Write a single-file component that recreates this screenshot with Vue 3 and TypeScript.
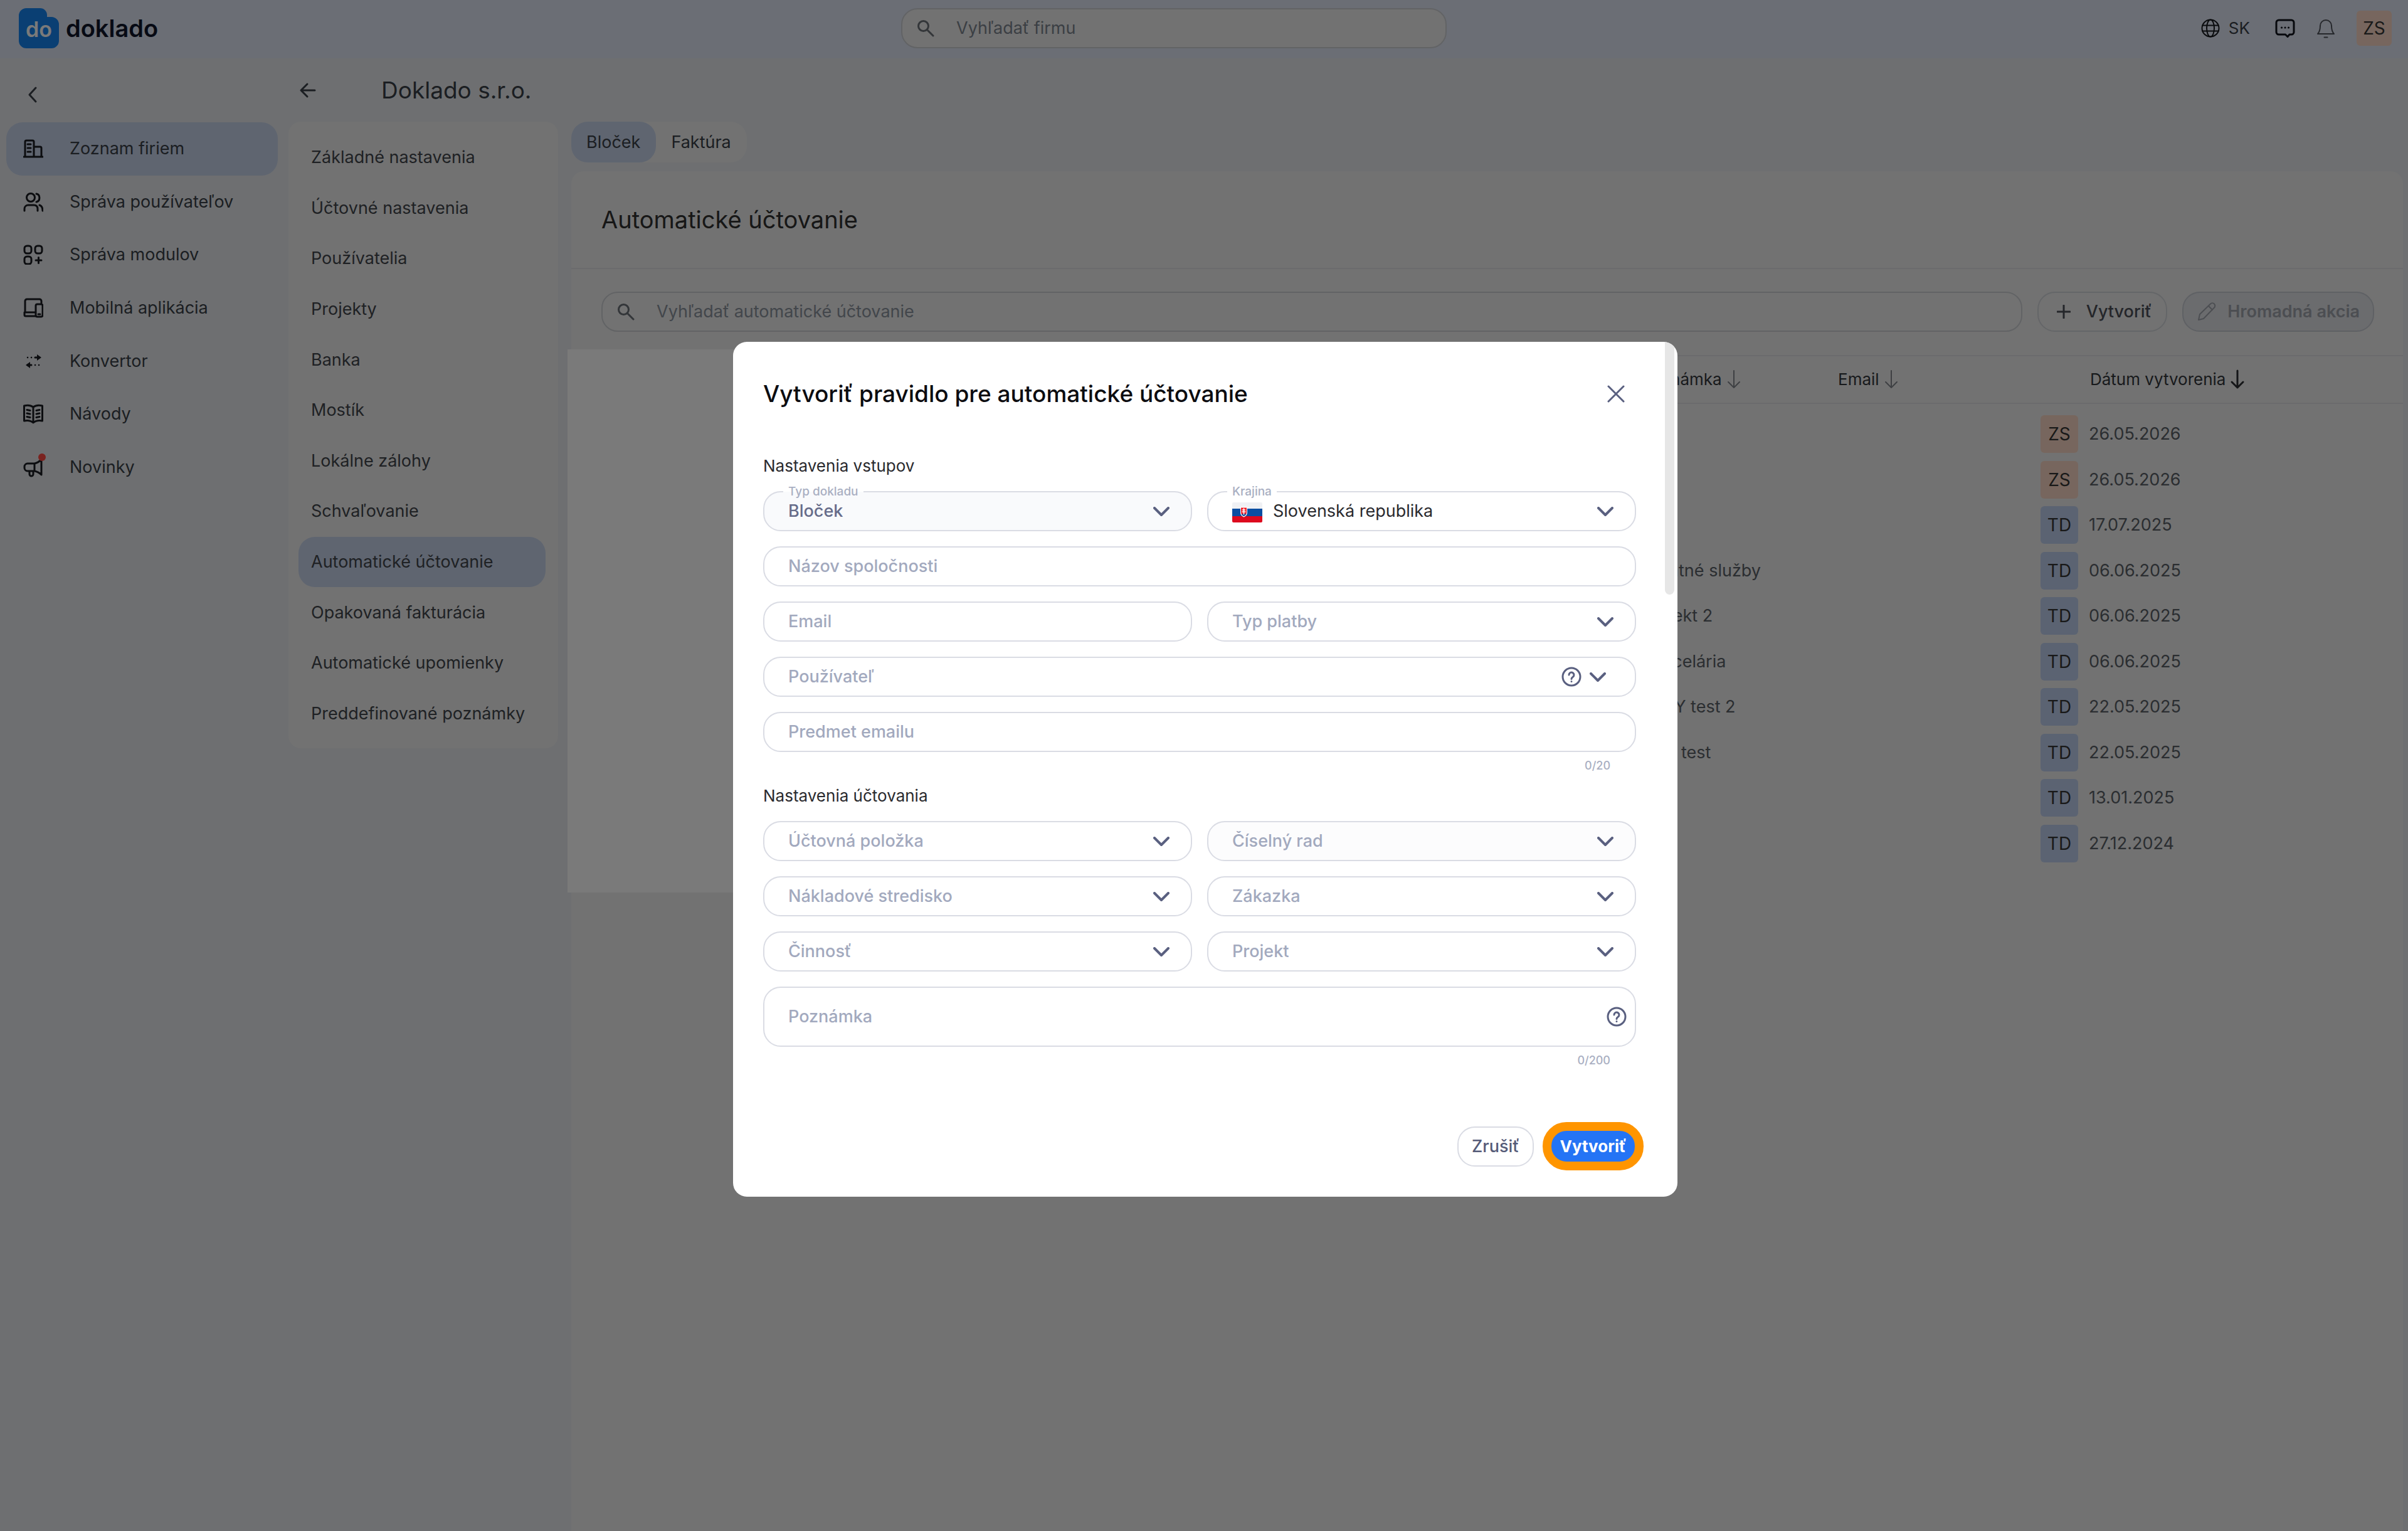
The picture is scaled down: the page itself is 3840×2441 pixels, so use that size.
<script setup lang="ts">
import { ref } from 'vue'

interface NavItem {
  label: string
  icon: string
  active?: boolean
  dot?: boolean
}

interface Rule {
  note: string
  owner: 'ZS' | 'TD'
  date: string
}

const navItems: NavItem[] = [
  { label: 'Zoznam firiem', icon: 'building', active: true },
  { label: 'Správa používateľov', icon: 'users' },
  { label: 'Správa modulov', icon: 'modules' },
  { label: 'Mobilná aplikácia', icon: 'devices' },
  { label: 'Konvertor', icon: 'convert' },
  { label: 'Návody', icon: 'book' },
  { label: 'Novinky', icon: 'megaphone', dot: true },
]

const settings: string[] = [
  'Základné nastavenia',
  'Účtovné nastavenia',
  'Používatelia',
  'Projekty',
  'Banka',
  'Mostík',
  'Lokálne zálohy',
  'Schvaľovanie',
  'Automatické účtovanie',
  'Opakovaná fakturácia',
  'Automatické upomienky',
  'Preddefinované poznámky',
]
const activeSetting = 'Automatické účtovanie'

const rules: Rule[] = [
  { note: '', owner: 'ZS', date: '26.05.2026' },
  { note: '', owner: 'ZS', date: '26.05.2026' },
  { note: '', owner: 'TD', date: '17.07.2025' },
  { note: 'Ostatné služby', owner: 'TD', date: '06.06.2025' },
  { note: 'Projekt 2', owner: 'TD', date: '06.06.2025' },
  { note: 'Kancelária', owner: 'TD', date: '06.06.2025' },
  { note: 'EASY test 2', owner: 'TD', date: '22.05.2025' },
  { note: 'NAY test', owner: 'TD', date: '22.05.2025' },
  { note: '', owner: 'TD', date: '13.01.2025' },
  { note: '', owner: 'TD', date: '27.12.2024' },
]

const accountingSelects: { label: string; muted?: boolean }[] = [
  { label: 'Účtovná položka' },
  { label: 'Číselný rad', muted: true },
  { label: 'Nákladové stredisko' },
  { label: 'Zákazka' },
  { label: 'Činnosť' },
  { label: 'Projekt' },
]

const company = ref('')
const email = ref('')
const subject = ref('')
const note = ref('')
</script>

<template>
  <div class="app">
    <header class="topbar">
      <a href="#" class="brand">
        <span class="brand-mark">
          <svg viewBox="0 0 64 64" aria-hidden="true">
            <path d="M12 0h22a11 11 0 0 1 11 11v3h7a12 12 0 0 1 12 12v26a12 12 0 0 1-12 12H12A12 12 0 0 1 0 52V12A12 12 0 0 1 12 0z" fill="#1584f0" />
          </svg>
          <span class="brand-short">do</span>
        </span>
        <span class="brand-name">doklado</span>
      </a>
      <label class="search top-search">
        <svg class="ic-search" viewBox="0 0 28 28" aria-hidden="true"><circle cx="10.5" cy="10.5" r="8" /><path d="M16.500 16.500 26 26" /></svg>
        <input type="search" placeholder="Vyhľadať firmu" aria-label="Vyhľadať firmu" />
      </label>
      <div class="top-actions">
        <button type="button" class="plain lang">
          <svg class="ic-globe" viewBox="0 0 30 30" aria-hidden="true"><circle cx="15" cy="15" r="13.500" /><ellipse cx="15" cy="15" rx="6" ry="13.500" /><path d="M2.500 10.500h25M2.500 19.500h25" /></svg>
          <span>SK</span>
        </button>
        <button type="button" class="plain chat" aria-label="Správy">
          <svg viewBox="0 0 32 32" aria-hidden="true"><path d="M6 3h20a4 4 0 0 1 4 4v15a4 4 0 0 1-4 4h-3l-3 3.500-3.500-3.500H6a4 4 0 0 1-4-4V7a4 4 0 0 1 4-4z" stroke-width="3" /><path d="M10.500 15h.1M16 15h.1M21.500 15h.1" stroke-width="3" /></svg>
        </button>
        <button type="button" class="plain bell" aria-label="Upozornenia">
          <svg viewBox="0 0 32 32" aria-hidden="true"><path d="M3 25c3-3 4-7 4-13a9 9 0 0 1 18 0c0 6 1 10 4 13z" /><path d="M13.500 30.500h5" /></svg>
        </button>
        <span class="avatar zs">ZS</span>
      </div>
    </header>

    <div class="body">
      <aside class="sidebar">
        <button type="button" class="plain collapse" aria-label="Zbaliť menu">
          <svg viewBox="0 0 28 28" aria-hidden="true"><path d="M19 3 9 14l10 11" /></svg>
        </button>
        <nav class="nav">
          <a v-for="item in navItems" :key="item.label" href="#" class="nav-item" :class="{ active: item.active }">
            <span class="nav-icon">
              <svg viewBox="0 0 32 32" aria-hidden="true">
                <template v-if="item.icon === 'building'">
                  <path d="M3 29V5a2 2 0 0 1 2-2h10a2 2 0 0 1 2 2v24M17 13h10a2 2 0 0 1 2 2v14M1 29h30M7 9h5M7 15h5M7 21h5" />
                </template>
                <template v-else-if="item.icon === 'users'">
                  <circle cx="12" cy="9" r="6.500" />
                  <path d="M2 30v-3c0-4 3-6 6-6h9c4 0 6 2 6 6v3M21 3c6 1 7 11 0 13M26 21c3 1 5 3 5 9" />
                </template>
                <template v-else-if="item.icon === 'modules'">
                  <rect x="2" y="2" width="11" height="12" rx="4" />
                  <rect x="19" y="2" width="11" height="12" rx="4" />
                  <rect x="2" y="19" width="11" height="12" rx="4" />
                  <path d="M20 25h9M24.500 20.500v9" />
                </template>
                <template v-else-if="item.icon === 'devices'">
                  <path d="M3 23V5a3 3 0 0 1 3-3h20a3 3 0 0 1 3 3v3M19 23H2v4a2 2 0 0 0 2 2h15" />
                  <rect x="20" y="10" width="11" height="20" rx="2.500" />
                  <path d="M24 26h3" />
                </template>
                <template v-else-if="item.icon === 'convert'">
                  <path d="M19 10h6M7 22h6" />
                  <path d="M22 5 29 10l-7 5zM11 17 4 22l7 5z" fill="currentColor" stroke="none" />
                  <path d="M7 10h.1M13 10h.1M19 22h.1M25 22h.1" stroke-width="2.500" />
                </template>
                <template v-else-if="item.icon === 'book'">
                  <path d="M1.500 3C7 1.500 12 2 16 5c4-3 9-3.500 14.500-2v24c-5-1-10-1-14.500 3-4.500-4-9.500-4-14.500-3zM16 5v24M6 9.500l5 1M6 15l5 1M6 20.500l5 1M21 10.500l5-1M21 16l5-1M21 21.500l5-1" />
                </template>
                <template v-else>
                  <path d="M7 10h11v12H7a5 5 0 0 1-5-5v-2a5 5 0 0 1 5-5zM18 10c5-1 8-3 11-7v25c-3-3-6-5-11-6M10 22v5a3 3 0 0 0 6 0v-5" />
                </template>
              </svg>
              <span v-if="item.dot" class="dot"></span>
            </span>
            <span>{{ item.label }}</span>
          </a>
        </nav>
      </aside>

      <div class="content">
        <div class="page-head">
          <button type="button" class="plain back" aria-label="Späť">
            <svg viewBox="0 0 28 28" aria-hidden="true"><path d="M25 14H4M13 4 3 14l10 10" /></svg>
          </button>
          <h1>Doklado s.r.o.</h1>
        </div>
        <div class="columns">
          <nav class="submenu">
            <a v-for="s in settings" :key="s" href="#" :class="{ active: s === activeSetting }"><span>{{ s }}</span></a>
          </nav>
          <main class="main">
            <div class="tabs">
              <button type="button" class="tab active">Bloček</button>
              <button type="button" class="tab">Faktúra</button>
            </div>
            <section class="panel">
              <div class="panel-title"><h2>Automatické účtovanie</h2></div>
              <div class="toolbar">
                <label class="search">
                  <svg class="ic-search" viewBox="0 0 28 28" aria-hidden="true"><circle cx="10.5" cy="10.5" r="8" /><path d="M16.500 16.500 26 26" /></svg>
                  <input type="search" placeholder="Vyhľadať automatické účtovanie" aria-label="Vyhľadať automatické účtovanie" />
                </label>
                <button type="button" class="btn create">
                  <svg viewBox="0 0 22 22" aria-hidden="true"><path d="M11 1v20M1 11h20" /></svg>
                  Vytvoriť
                </button>
                <button type="button" class="btn bulk" disabled>
                  <svg viewBox="0 0 32 32" aria-hidden="true"><path d="M3 29l2-9L22 3.500a4 4 0 0 1 6 6L11 27zM19 7l6 6" /></svg>
                  Hromadná akcia
                </button>
              </div>
              <div class="table-area">
                <table>
                  <colgroup>
                    <col />
                    <col class="c-note" />
                    <col class="c-email" />
                    <col class="c-date" />
                  </colgroup>
                  <thead>
                    <tr>
                      <td></td>
                      <th scope="col">
                        <span class="th">Poznámka<svg class="sort" viewBox="0 0 24 32" aria-hidden="true"><path d="M12 2v27M3 20l9 9 9-9" /></svg></span>
                      </th>
                      <th scope="col">
                        <span class="th">Email<svg class="sort" viewBox="0 0 24 32" aria-hidden="true"><path d="M12 2v27M3 20l9 9 9-9" /></svg></span>
                      </th>
                      <th scope="col" class="th-date">
                        <span class="th">Dátum vytvorenia<svg class="sort on" viewBox="0 0 24 32" aria-hidden="true"><path d="M12 2v27M3 20l9 9 9-9" /></svg></span>
                      </th>
                    </tr>
                  </thead>
                  <tbody>
                    <tr v-for="(r, i) in rules" :key="i">
                      <td></td>
                      <td>{{ r.note }}</td>
                      <td></td>
                      <td>
                        <span class="created"><span class="avatar" :class="r.owner.toLowerCase()">{{ r.owner }}</span>{{ r.date }}</span>
                      </td>
                    </tr>
                  </tbody>
                </table>
                <div class="pinned"></div>
              </div>
            </section>
          </main>
        </div>
      </div>
    </div>

    <div class="backdrop">
      <form class="modal" role="dialog" aria-labelledby="modal-title" @submit.prevent>
        <div class="modal-head">
          <h2 id="modal-title">Vytvoriť pravidlo pre automatické účtovanie</h2>
          <button type="button" class="plain close" aria-label="Zavrieť">
            <svg viewBox="0 0 28 28" aria-hidden="true"><path d="M2 2l24 24M26 2 2 26" /></svg>
          </button>
        </div>

        <h3>Nastavenia vstupov</h3>
        <div class="fields">
          <div class="field filled">
            <label for="doc-type" class="float tinted">Typ dokladu</label>
            <select id="doc-type" class="value"><option>Bloček</option></select>
            <svg class="chevron" viewBox="0 0 26 16" aria-hidden="true"><path d="M2 2l11 11L24 2" /></svg>
          </div>
          <div class="field">
            <label for="country" class="float">Krajina</label>
            <svg class="flag" viewBox="0 0 48 32" aria-hidden="true">
              <path fill="#f0f1f4" d="M0 0h48v11H0z" /><path fill="#0b4ea2" d="M0 10h48v12H0z" /><path fill="#dd0a1e" d="M0 22h48v10H0z" />
              <path fill="#fff" d="M13 7h11v9c0 4-2.500 6-5.500 7.500C15.500 22 13 20 13 16z" />
              <path fill="#ee1c25" d="M14 8.500h9V16c0 3-2 4.500-4.500 6-2.500-1.500-4.500-3-4.500-6z" />
              <path fill="#0b4ea2" d="M15 19c1-1.500 2-1.500 3.500 0 1.500-1.500 2.500-1.500 3.500 0-1 1.500-2 2.500-3.500 3C17 21.500 16 20.500 15 19z" />
              <path stroke="#fff" stroke-width="1.500" d="M18.500 10v9M16.500 12h4M16 15h5" />
            </svg>
            <select id="country" class="country"><option>Slovenská republika</option></select>
            <svg class="chevron" viewBox="0 0 26 16" aria-hidden="true"><path d="M2 2l11 11L24 2" /></svg>
          </div>
          <div class="field wide"><input v-model="company" type="text" placeholder="Názov spoločnosti" aria-label="Názov spoločnosti" /></div>
          <div class="field"><input v-model="email" type="email" placeholder="Email" aria-label="Email" /></div>
          <div class="field">
            <select aria-label="Typ platby"><option>Typ platby</option></select>
            <svg class="chevron" viewBox="0 0 26 16" aria-hidden="true"><path d="M2 2l11 11L24 2" /></svg>
          </div>
          <div class="field wide user">
            <select aria-label="Používateľ"><option>Používateľ</option></select>
            <svg class="help" viewBox="0 0 32 32" aria-hidden="true"><circle cx="16" cy="16" r="14" /><path d="M12 13a4 4 0 1 1 6 3.500c-1.500 1-2 1.500-2 3M16 23.500v.1" /></svg>
            <svg class="chevron" viewBox="0 0 26 16" aria-hidden="true"><path d="M2 2l11 11L24 2" /></svg>
          </div>
          <div class="field wide"><input v-model="subject" type="text" placeholder="Predmet emailu" aria-label="Predmet emailu" /></div>
        </div>
        <p class="counter">{{ subject.length }}/20</p>

        <h3 class="second">Nastavenia účtovania</h3>
        <div class="fields">
          <div v-for="s in accountingSelects" :key="s.label" class="field" :class="{ muted: s.muted }">
            <select :aria-label="s.label"><option>{{ s.label }}</option></select>
            <svg class="chevron" viewBox="0 0 26 16" aria-hidden="true"><path d="M2 2l11 11L24 2" /></svg>
          </div>
          <div class="field wide area">
            <textarea v-model="note" placeholder="Poznámka" aria-label="Poznámka" rows="1"></textarea>
            <svg class="help" viewBox="0 0 32 32" aria-hidden="true"><circle cx="16" cy="16" r="14" /><path d="M12 13a4 4 0 1 1 6 3.500c-1.500 1-2 1.500-2 3M16 23.500v.1" /></svg>
          </div>
        </div>
        <p class="counter">{{ note.length }}/200</p>

        <div class="modal-foot">
          <button type="button" class="btn cancel">Zrušiť</button>
          <button type="submit" class="submit">Vytvoriť</button>
        </div>
        <div class="thumb"></div>
      </form>
    </div>
  </div>
</template>

<style>
body {
  margin: 0;
}
</style>

<style scoped>
.app {
  min-height: 100vh;
  display: flex;
  flex-direction: column;
  background: #e6e9ec;
  color: #3a3f47;
  font-family: "Inter", "Liberation Sans", sans-serif;
  font-size: 27px;
  line-height: 32px;
}
.app *,
.app *::before {
  box-sizing: border-box;
}
h1, h2, h3, p {
  margin: 0;
  font-weight: 400;
}
a {
  color: inherit;
  text-decoration: none;
}
button, input, select, textarea {
  font: inherit;
  color: inherit;
}
svg {
  display: block;
  flex: none;
  fill: none;
  stroke: currentColor;
  stroke-width: 2;
  stroke-linecap: round;
  stroke-linejoin: round;
}
.plain {
  padding: 0;
  border: 0;
  background: none;
  display: flex;
  align-items: center;
  justify-content: center;
}

/* Top bar */
.topbar {
  height: 93px;
  padding: 0 26px 4px 30px;
  display: grid;
  grid-template-columns: 1407fr 870fr 1507fr;
  align-items: center;
  background: #dfe5f4;
}
.brand {
  display: flex;
  align-items: center;
  gap: 11px;
  color: #10152a;
}
.brand-mark {
  display: grid;
  width: 64px;
  height: 64px;
}
.brand-mark > * {
  grid-area: 1 / 1;
}
.brand-mark svg {
  stroke: none;
}
.brand-short {
  align-self: end;
  text-align: center;
  font-size: 34px;
  font-weight: 600;
  line-height: 60px;
  color: #fff;
}
.brand-name {
  font-size: 38px;
  font-weight: 600;
}
.search {
  display: flex;
  align-items: center;
  flex: 1;
  height: 64px;
  padding: 0 23px;
  gap: 35px;
  border: 2px solid #cdd0d4;
  border-radius: 26px;
  background: #eee;
}
.search input {
  flex: 1;
  min-width: 0;
  padding: 0;
  border: 0;
  background: none;
  outline: 0;
}
.search input::placeholder {
  color: #8b939d;
  opacity: 1;
}
.top-search input::placeholder {
  color: #7c858f;
}
.ic-search {
  width: 28px;
  height: 28px;
  stroke-width: 3;
  color: #6c7178;
}
.top-actions {
  display: flex;
  align-items: center;
  justify-content: flex-end;
}
.top-actions svg {
  width: 32px;
  height: 32px;
}
.lang {
  gap: 14px;
  margin-right: 40px;
  font-size: 26px;
}
.top-actions .ic-globe {
  width: 30px;
  height: 30px;
  color: #14171c;
}
.chat {
  margin-right: 33px;
  color: #10131c;
}
.bell {
  margin-right: 33px;
  color: #50545c;
}
.avatar {
  display: grid;
  place-items: center;
  flex: none;
  width: 60px;
  height: 60px;
  border-radius: 6px;
  font-size: 28px;
  color: #363636;
}
.top-actions .avatar {
  width: 56px;
  height: 56px;
}
.zs {
  background: #f8d6c4;
}
.td {
  background: #bfd0ee;
}

/* Left navigation */
.body {
  flex: 1;
  display: flex;
}
.sidebar {
  flex: none;
  width: 460px;
  padding: 28px 17px 0 10px;
}
.collapse {
  width: 84px;
  height: 60px;
  margin-bottom: 14px;
}
.collapse svg {
  width: 28px;
  height: 28px;
  stroke-width: 3;
}
.nav {
  height: 592px;
  display: grid;
  grid-template-rows: repeat(7, 1fr);
}
.nav-item {
  display: flex;
  align-items: center;
  gap: 42px;
  padding-left: 27px;
  border-radius: 26px;
}
.nav-item.active,
.submenu .active,
.tab.active {
  background: #c6d3eb;
}
.nav-icon {
  position: relative;
  color: #1a1c22;
}
.nav-icon svg {
  width: 32px;
  height: 32px;
  stroke-width: 3;
}
.dot {
  position: absolute;
  top: -6px;
  right: -4px;
  width: 12px;
  height: 12px;
  border-radius: 50%;
  background: #ff4a44;
}

/* Company page */
.content {
  flex: 1;
  min-width: 0;
  display: flex;
  flex-direction: column;
}
.page-head {
  height: 101px;
  display: flex;
  align-items: center;
  gap: 86px;
}
.page-head h1 {
  font-size: 37px;
  line-height: 44px;
}
.back {
  width: 62px;
  height: 60px;
}
.back svg {
  width: 28px;
  height: 28px;
  stroke-width: 3;
}
.columns {
  flex: 1;
  display: flex;
  gap: 21px;
  padding-right: 8px;
}
.submenu {
  flex: none;
  align-self: flex-start;
  width: 430px;
  height: 999px;
  padding: 17px 20px 15px 16px;
  display: grid;
  grid-template-rows: repeat(12, 1fr);
  background: #eee;
  border-radius: 20px;
  color: #42464c;
}
.submenu a {
  display: flex;
  align-items: center;
  padding-left: 20px;
  border-radius: 26px;
}
.main {
  flex: 1;
  min-width: 0;
  display: flex;
  flex-direction: column;
}
.tabs {
  align-self: flex-start;
  display: flex;
  height: 65px;
  margin-bottom: 14px;
  background: #eee;
  border-radius: 26px;
}
.tab {
  padding: 0 25px 0 24px;
  border: 0;
  border-radius: 26px;
  background: none;
}
.panel {
  flex: 1;
  background: #eee;
  border-radius: 20px 20px 0 0;
}
.panel-title {
  height: 156px;
  padding: 0 48px;
  display: flex;
  align-items: center;
  border-bottom: 2px solid #dfe0e3;
}
.panel-title h2 {
  font-size: 38px;
  line-height: 44px;
  color: #303030;
}
.toolbar {
  display: flex;
  gap: 24px;
  padding: 36px 46px 37px 48px;
}
.btn {
  display: flex;
  align-items: center;
  height: 64px;
  border: 2px solid #d2d5da;
  border-radius: 28px;
  background: none;
  font-weight: 500;
}
.create {
  padding: 0 23px 0 29px;
  gap: 25px;
  color: #4c5058;
}
.create svg {
  width: 22px;
  height: 22px;
  stroke-width: 3;
}
.bulk {
  padding: 0 21px;
  gap: 17px;
  background: #dfe2e6;
  border-color: #c6cad2;
  color: #a0a4ac;
  font-weight: 600;
}
.bulk svg {
  width: 32px;
  height: 32px;
}
.table-area {
  position: relative;
}
.pinned {
  position: absolute;
  top: -9px;
  left: -6px;
  width: 800px;
  height: 866px;
  background: #fff;
}
table {
  width: 100%;
  table-layout: fixed;
  border-collapse: collapse;
  color: #5a6068;
}
.c-note {
  width: 313px;
}
.c-email {
  width: 323px;
}
.c-date {
  width: 578px;
}
th, td {
  padding: 0;
  text-align: left;
  font-weight: 400;
  white-space: nowrap;
}
thead tr {
  height: 76px;
  border-top: 2px solid #dfe0e3;
  border-bottom: 2px solid #dfe0e3;
}
thead th {
  font-size: 26px;
  color: #34373c;
}
.th {
  display: flex;
  align-items: center;
  gap: 7px;
}
.th-date {
  padding-left: 79px;
}
.sort {
  width: 24px;
  height: 32px;
  color: #83878d;
}
.sort.on {
  color: #2c2e32;
  stroke-width: 3;
}
tbody::before {
  content: "";
  display: block;
  height: 12px;
}
tbody tr {
  height: 72px;
}
tbody tr:nth-child(even) {
  height: 73px;
}
.created {
  display: flex;
  align-items: center;
  gap: 17px;
}

/* Dialog */
.backdrop {
  position: fixed;
  inset: 0;
  display: flex;
  align-items: center;
  justify-content: center;
  padding: 12px 0 0 4px;
  background: rgba(0, 0, 0, 0.52);
}
.modal {
  position: relative;
  width: min(1506px, 94vw);
  padding: 51px 66px 42px 48px;
  border-radius: 22px;
  background: #fff;
  overflow: hidden;
}
.modal-head {
  height: 64px;
  display: flex;
  align-items: center;
  justify-content: space-between;
  margin-bottom: 67px;
}
.modal-head h2 {
  font-size: 37px;
  line-height: 44px;
  font-weight: 500;
  color: #0c0c10;
}
.close {
  width: 64px;
  height: 64px;
  color: #5a6080;
}
.close svg {
  width: 28px;
  height: 28px;
  stroke-width: 3;
}
h3 {
  font-size: 26px;
  line-height: 32px;
  margin-bottom: 24px;
  color: #2a2a2e;
}
.fields {
  display: grid;
  grid-template-columns: 1fr 1fr;
  gap: 24px;
}
.field {
  position: relative;
  display: flex;
  height: 64px;
  border: 2px solid #dadce4;
  border-radius: 28px;
  background: #fff;
  color: #5a6080;
}
.field.filled {
  background: #f9fafc;
}
.field.muted {
  background: #fcfcfd;
}
.wide {
  grid-column: 1 / -1;
}
.field input,
.field select,
.field textarea {
  appearance: none;
  flex: 1;
  min-width: 0;
  margin: 0;
  padding: 0 100px 0 38px;
  border: 0;
  outline: 0;
  border-radius: 26px;
  background: none;
  color: #a2a9be;
  font-weight: 500;
  resize: none;
}
.field ::placeholder {
  color: #a2a9be;
  opacity: 1;
}
.field .value {
  color: #666c8a;
}
.field .country {
  padding-left: 103px;
  color: #2a2a2e;
  font-weight: 400;
}
.float {
  position: absolute;
  top: -13px;
  left: 30px;
  padding: 0 8px;
  font-size: 19px;
  line-height: 24px;
  font-weight: 500;
  color: #a9afc2;
  background: #fff;
}
.float.tinted {
  background: linear-gradient(#fff 50%, #f9fafc 50%);
}
.flag {
  position: absolute;
  left: 38px;
  top: 16px;
  width: 48px;
  height: 32px;
  border-radius: 2px;
  stroke: none;
}
.chevron {
  position: absolute;
  right: 34px;
  top: 23px;
  width: 26px;
  height: 16px;
  stroke-width: 4;
  pointer-events: none;
}
.help {
  position: absolute;
  right: 13px;
  width: 32px;
  height: 32px;
  stroke-width: 3;
}
.user .chevron {
  right: 46px;
}
.user .help {
  right: 85px;
  top: 14px;
}
.field.area {
  height: 96px;
}
.area textarea {
  padding-top: 30px;
}
.area .help {
  top: 30px;
}
.counter {
  margin-top: 8px;
  padding-right: 41px;
  text-align: right;
  font-size: 18px;
  line-height: 28px;
  font-weight: 500;
  color: #a9afc2;
}
.second {
  margin-top: 18px;
}
.modal-foot {
  display: flex;
  align-items: center;
  justify-content: flex-end;
  gap: 14px;
  margin: 84px -12px 0 0;
}
.cancel {
  padding: 0 21px;
  color: #555b78;
  border-color: #dadce4;
}
.submit {
  height: 77px;
  width: 161px;
  padding: 0;
  border: 14px solid #ff9500;
  border-radius: 38px;
  background: #2474f5;
  color: #fff;
  font-weight: 700;
  font-size: 26px;
  text-align: center;
}
.thumb {
  position: absolute;
  top: 0;
  right: 5px;
  width: 15px;
  height: 403px;
  border-radius: 0 0 8px 8px;
  background: #e6e6e6;
}
</style>
